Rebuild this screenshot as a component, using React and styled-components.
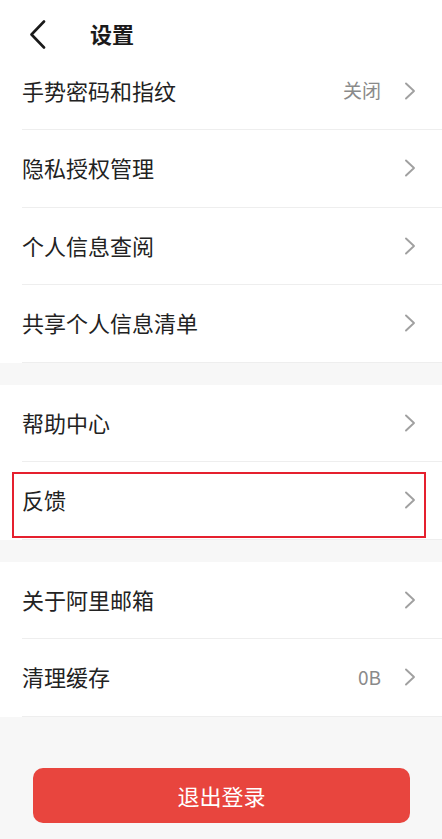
import React from "react";
import styled, { createGlobalStyle } from "styled-components";

const Global = createGlobalStyle`
  html, body { margin: 0; padding: 0; background: #f7f7f7; }
  body { font-family: "Noto Sans CJK SC", "Noto Sans", sans-serif; -webkit-font-smoothing: antialiased; }
  * { box-sizing: border-box; }
`;

const Page = styled.div`
  width: 442px;
  min-height: 839px;
  background: #f7f7f7;
  display: flex;
  flex-direction: column;
`;

const Header = styled.div`
  height: 52.5px;
  background: #fff;
  display: flex;
  align-items: center;
  padding-top: 16px;
  padding-left: 29px;
  gap: 44px;
`;

const Title = styled.div`
  font-size: 22px;
  font-weight: 700;
  color: #1a1a1a;
  line-height: 1;
  margin-top: -2px;
`;

const Section = styled.div`
  background: #fff;
  margin-bottom: ${(p) => (p.$last ? "0" : "22px")};
`;

const Row = styled.div`
  position: relative;
  height: 77.5px;
  margin-left: 22px;
  padding-right: 26px;
  display: flex;
  align-items: center;
  border-bottom: 1px solid #eeeeee;
`;

const Label = styled.div`
  flex: 1;
  font-size: 22px;
  color: #222;
  line-height: 1;
  margin-top: -2px;
`;

const Value = styled.div`
  font-size: 19px;
  color: #8a8a8a;
  margin-right: 23px;
  line-height: 1;
  margin-top: -2px;
`;

const Highlight = styled.div`
  position: absolute;
  left: -10px;
  right: 16px;
  top: 10px;
  bottom: 1px;
  border: 2px solid #e5202e;
  pointer-events: none;
`;

const ButtonWrap = styled.div`
  padding: 51px 32px 0 33px;
`;

const Logout = styled.button`
  width: 100%;
  height: 55px;
  border: none;
  border-radius: 10px;
  background: #e8453e;
  color: #fff;
  font-family: "Noto Sans CJK SC", sans-serif;
  font-size: 22px;
  display: flex;
  align-items: center;
  justify-content: center;
  padding: 0;
`;

const Chevron = () => (
  <svg width="12" height="18" viewBox="0 0 12 18" style={{ display: "block" }}>
    <path d="M2 1.5 L10 9 L2 16.5" fill="none" stroke="#a0a0a0" strokeWidth="1.9" strokeLinecap="round" strokeLinejoin="round" />
  </svg>
);

const Back = () => (
  <svg width="17" height="29" viewBox="0 0 17 29" style={{ display: "block" }}>
    <path d="M15 1.5 L2.5 14.5 L15 27.5" fill="none" stroke="#1a1a1a" strokeWidth="2.6" strokeLinecap="round" strokeLinejoin="round" />
  </svg>
);

const sections = [
  [
    { label: "手势密码和指纹", value: "关闭" },
    { label: "隐私授权管理" },
    { label: "个人信息查阅" },
    { label: "共享个人信息清单" },
  ],
  [{ label: "帮助中心" }, { label: "反馈", highlight: true }],
  [{ label: "关于阿里邮箱" }, { label: "清理缓存", value: "0B" }],
];

export default function App() {
  return (
    <>
      <Global />
      <Page>
        <Header>
          <Back />
          <Title>设置</Title>
        </Header>
        {sections.map((rows, i) => (
          <Section key={i} $last={i === sections.length - 1}>
            {rows.map((r, j) => (
              <Row key={j}>
                <Label>{r.label}</Label>
                {r.value && <Value>{r.value}</Value>}
                <Chevron />
                {r.highlight && <Highlight />}
              </Row>
            ))}
          </Section>
        ))}
        <ButtonWrap>
          <Logout>退出登录</Logout>
        </ButtonWrap>
      </Page>
    </>
  );
}
